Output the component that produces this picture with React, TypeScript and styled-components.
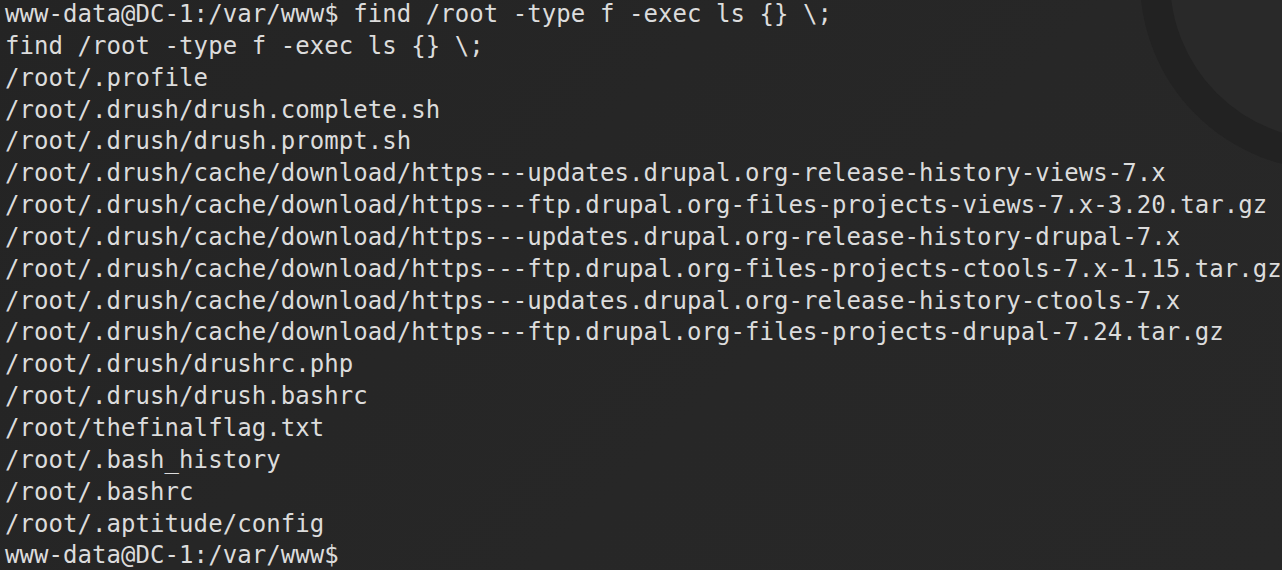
import React from "react";
import styled, { createGlobalStyle } from "styled-components";

const Global = createGlobalStyle`
  html, body { margin: 0; padding: 0; background: #262626; }
  body { width: 1282px; height: 570px; overflow: hidden; }
`;

const Screen = styled.div`
  position: relative;
  width: 1282px;
  height: 570px;
  overflow: hidden;
  background: linear-gradient(135deg, #242424 0%, #272727 60%, #282828 100%);
`;

const Ring = styled.div`
  position: absolute;
  left: 1140px;
  top: -210px;
  width: 380px;
  height: 380px;
  border-radius: 50%;
  box-sizing: border-box;
  border: 30px solid #222222;
  background: #292929;
  pointer-events: none;
`;

const Output = styled.pre`
  position: relative;
  margin: -1px 0 0 0;
  padding: 0 0 0 5px;
  font-family: "DejaVu Sans Mono", "Liberation Mono", monospace;
  font-size: 24px;
  line-height: 31.85px;
  color: #dcdcdc;
  white-space: pre;
  letter-spacing: 0.06px;
`;

const Line = styled.div``;

const lines = [
  "www-data@DC-1:/var/www$ find /root -type f -exec ls {} \\;",
  "find /root -type f -exec ls {} \\;",
  "/root/.profile",
  "/root/.drush/drush.complete.sh",
  "/root/.drush/drush.prompt.sh",
  "/root/.drush/cache/download/https---updates.drupal.org-release-history-views-7.x",
  "/root/.drush/cache/download/https---ftp.drupal.org-files-projects-views-7.x-3.20.tar.gz",
  "/root/.drush/cache/download/https---updates.drupal.org-release-history-drupal-7.x",
  "/root/.drush/cache/download/https---ftp.drupal.org-files-projects-ctools-7.x-1.15.tar.gz",
  "/root/.drush/cache/download/https---updates.drupal.org-release-history-ctools-7.x",
  "/root/.drush/cache/download/https---ftp.drupal.org-files-projects-drupal-7.24.tar.gz",
  "/root/.drush/drushrc.php",
  "/root/.drush/drush.bashrc",
  "/root/thefinalflag.txt",
  "/root/.bash_history",
  "/root/.bashrc",
  "/root/.aptitude/config",
  "www-data@DC-1:/var/www$",
];

export default function App() {
  return (
    <>
      <Global />
      <Screen>
        <Ring />
        <Output>
          {lines.map((l, i) => (
            <Line key={i}>{l}</Line>
          ))}
        </Output>
      </Screen>
    </>
  );
}
